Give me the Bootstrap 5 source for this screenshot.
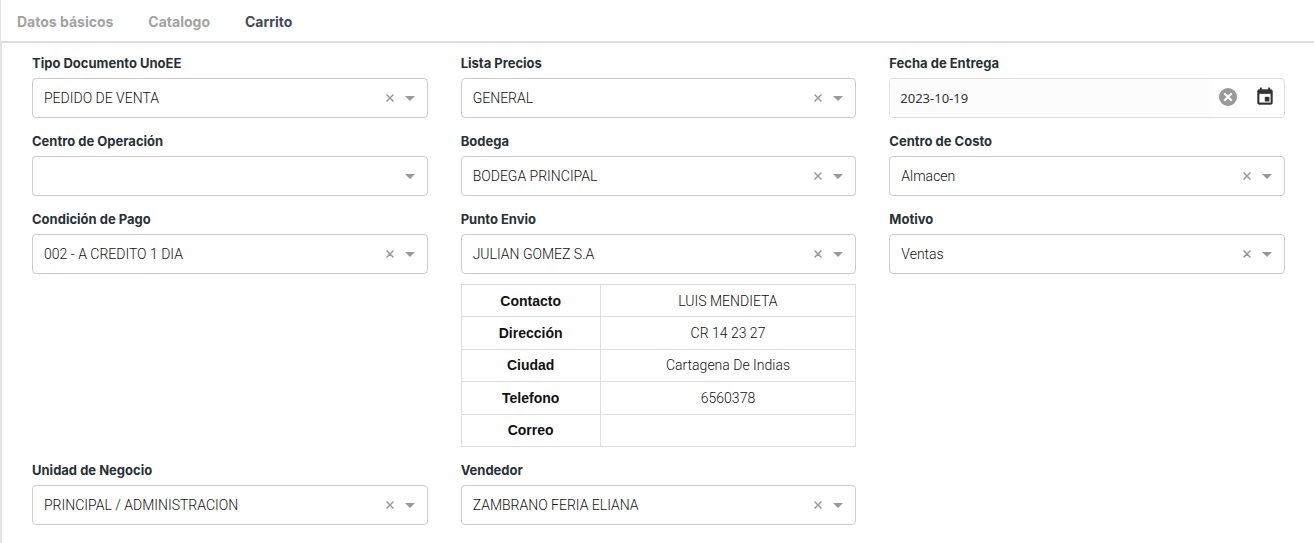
<!DOCTYPE html>
<html lang="es">
<head>
<meta charset="utf-8">
<meta name="viewport" content="width=device-width, initial-scale=1">
<title>Carrito</title>
<link href="https://cdn.jsdelivr.net/npm/bootstrap@5.3.0/dist/css/bootstrap.min.css" rel="stylesheet">
<style>
  body { font-family: Roboto, sans-serif; font-size: 14px; color: #212529; background: #fff; }
  .step-tabs { border-bottom: 2px solid #dedede; border-left: 1px solid #e3e3e3; gap: 35px; padding: 0 16px; }
  .step-tabs .nav-link { padding: 11px 0 8px; font: 700 14px/22px Inter, sans-serif; color: #a3a3a3; }
  .step-tabs .nav-link.active { color: #414b57; }
  .order-form { border-left: 2px solid #e3e3e3; padding: 10px 29px 6px 30px; min-height: calc(100vh - 43px); }
  .order-form > .row { --bs-gutter-x: 33px; }
  .field { margin-bottom: 13px; }
  .field-label { display: block; font: 700 13px/20px Inter, sans-serif; color: #263238; margin-bottom: 5px; }
  .field-box { position: relative; }
  .field-box .form-select, .date-box {
    height: 40px; border: 1px solid #ccc; border-radius: 4px; }
  .field-box .form-select {
    padding: 0 60px 0 11px; font-size: 14px; font-weight: 300; color: #111;
    background: #fff url("data:image/svg+xml,%3Csvg xmlns='http://www.w3.org/2000/svg' width='10' height='5'%3E%3Cpath d='M0 0h10L5 5z' fill='%23999'/%3E%3C/svg%3E") no-repeat right 12px center / 10px 5px; }
  .clear-btn { position: absolute; right: 29px; top: 1px; width: 18px; height: 38px; }
  .icon-btn { padding: 0; border: 0; background: none; color: #999; display: flex; align-items: center; justify-content: center; }
  .date-box { border-color: #dedede; background: #fff; overflow: hidden; }
  .date-box input { border: 0; background: #fcfcfc; padding: 0 10px; font: 400 13px/20px "Noto Sans", sans-serif; color: #333; min-width: 0; margin-right: 10px; }
  .date-box .icon-btn { width: 18px; margin-bottom: 2px; }
  .date-box .day-btn { color: #333; margin: 0 10px 2px 19px; }
  .contact-table { height: 163px; margin: -3px 0 13px; font-weight: 300; color: #111; text-align: center; border-color: #dedede; }
  .contact-table th, .contact-table td { padding: 0; vertical-align: middle; line-height: 20px; border: 1px solid #dedede; }
  .contact-table th { width: 139px; font: 700 14px/20px "Liberation Sans", Arial, sans-serif; }
</style>
</head>
<body>
<nav class="nav step-tabs">
  <a class="nav-link" href="#datos">Datos básicos</a>
  <a class="nav-link" href="#catalogo">Catalogo</a>
  <a class="nav-link active" href="#carrito" aria-current="page">Carrito</a>
</nav>
<main id="carrito">
<form class="order-form">
  <div class="row">
    <div class="col-4"><div class="field">
      <label class="field-label" for="tipo">Tipo Documento UnoEE</label>
      <div class="field-box"><select class="form-select" id="tipo"><option>PEDIDO DE VENTA</option></select>
        <button type="button" class="icon-btn clear-btn" aria-label="Borrar"><svg width="8" height="8"><path d="M.5.5l7 7m0-7l-7 7" stroke="currentColor" stroke-width="1.5"/></svg></button></div>
    </div></div>
    <div class="col-4"><div class="field">
      <label class="field-label" for="lista">Lista Precios</label>
      <div class="field-box"><select class="form-select" id="lista"><option>GENERAL</option></select>
        <button type="button" class="icon-btn clear-btn" aria-label="Borrar"><svg width="8" height="8"><path d="M.5.5l7 7m0-7l-7 7" stroke="currentColor" stroke-width="1.5"/></svg></button></div>
    </div></div>
    <div class="col-4"><div class="field">
      <label class="field-label" for="fecha">Fecha de Entrega</label>
      <div class="date-box d-flex">
        <input class="flex-grow-1" type="text" id="fecha" value="2023-10-19">
        <button type="button" class="icon-btn" aria-label="Borrar fecha"><svg width="18" height="18" viewBox="0 0 18 18"><circle cx="9" cy="9" r="9" fill="#999"/><path d="M5.3 5.3l7.4 7.4m0-7.4l-7.4 7.4" stroke="#fff" stroke-width="2.2"/></svg></button>
        <button type="button" class="icon-btn day-btn" aria-label="Abrir calendario"><svg width="20" height="20" viewBox="0 0 24 24" class="flex-shrink-0"><path fill="currentColor" d="M17 12h-5v5h5v-5zM16 1v2H8V1H6v2H5c-1.11 0-2 .9-2 2v14c0 1.1.89 2 2 2h14c1.1 0 2-.9 2-2V5c0-1.1-.9-2-2-2h-1V1h-2zm3 18H5V8h14v11z" stroke="currentColor" stroke-width=".5"/></svg></button>
      </div>
    </div></div>

    <div class="col-4"><div class="field">
      <label class="field-label" for="centro">Centro de Operación</label>
      <div class="field-box"><select class="form-select" id="centro"><option></option></select></div>
    </div></div>
    <div class="col-4"><div class="field">
      <label class="field-label" for="bodega">Bodega</label>
      <div class="field-box"><select class="form-select" id="bodega"><option>BODEGA PRINCIPAL</option></select>
        <button type="button" class="icon-btn clear-btn" aria-label="Borrar"><svg width="8" height="8"><path d="M.5.5l7 7m0-7l-7 7" stroke="currentColor" stroke-width="1.5"/></svg></button></div>
    </div></div>
    <div class="col-4"><div class="field">
      <label class="field-label" for="costo">Centro de Costo</label>
      <div class="field-box"><select class="form-select" id="costo"><option>Almacen</option></select>
        <button type="button" class="icon-btn clear-btn" aria-label="Borrar"><svg width="8" height="8"><path d="M.5.5l7 7m0-7l-7 7" stroke="currentColor" stroke-width="1.5"/></svg></button></div>
    </div></div>

    <div class="col-4"><div class="field">
      <label class="field-label" for="pago">Condición de Pago</label>
      <div class="field-box"><select class="form-select" id="pago"><option>002 - A CREDITO 1 DIA</option></select>
        <button type="button" class="icon-btn clear-btn" aria-label="Borrar"><svg width="8" height="8"><path d="M.5.5l7 7m0-7l-7 7" stroke="currentColor" stroke-width="1.5"/></svg></button></div>
    </div></div>
    <div class="col-4"><div class="field">
      <label class="field-label" for="envio">Punto Envio</label>
      <div class="field-box"><select class="form-select" id="envio"><option>JULIAN GOMEZ S.A</option></select>
        <button type="button" class="icon-btn clear-btn" aria-label="Borrar"><svg width="8" height="8"><path d="M.5.5l7 7m0-7l-7 7" stroke="currentColor" stroke-width="1.5"/></svg></button></div>
      </div>
      <table class="contact-table w-100">
        <tbody>
          <tr><th scope="row">Contacto</th><td>LUIS MENDIETA</td></tr>
          <tr><th scope="row">Dirección</th><td>CR 14 23 27</td></tr>
          <tr><th scope="row">Ciudad</th><td>Cartagena De Indias</td></tr>
          <tr><th scope="row">Telefono</th><td>6560378</td></tr>
          <tr><th scope="row">Correo</th><td></td></tr>
        </tbody>
      </table>
    </div>
    <div class="col-4"><div class="field">
      <label class="field-label" for="motivo">Motivo</label>
      <div class="field-box"><select class="form-select" id="motivo"><option>Ventas</option></select>
        <button type="button" class="icon-btn clear-btn" aria-label="Borrar"><svg width="8" height="8"><path d="M.5.5l7 7m0-7l-7 7" stroke="currentColor" stroke-width="1.5"/></svg></button></div>
    </div></div>

    <div class="col-4"><div class="field">
      <label class="field-label" for="unidad">Unidad de Negocio</label>
      <div class="field-box"><select class="form-select" id="unidad"><option>PRINCIPAL / ADMINISTRACION</option></select>
        <button type="button" class="icon-btn clear-btn" aria-label="Borrar"><svg width="8" height="8"><path d="M.5.5l7 7m0-7l-7 7" stroke="currentColor" stroke-width="1.5"/></svg></button></div>
    </div></div>
    <div class="col-4"><div class="field">
      <label class="field-label" for="vendedor">Vendedor</label>
      <div class="field-box"><select class="form-select" id="vendedor"><option>ZAMBRANO FERIA ELIANA</option></select>
        <button type="button" class="icon-btn clear-btn" aria-label="Borrar"><svg width="8" height="8"><path d="M.5.5l7 7m0-7l-7 7" stroke="currentColor" stroke-width="1.5"/></svg></button></div>
    </div></div>
  </div>
</form>
</main>
<script src="https://cdn.jsdelivr.net/npm/bootstrap@5.3.0/dist/js/bootstrap.bundle.min.js"></script>
</body>
</html>
